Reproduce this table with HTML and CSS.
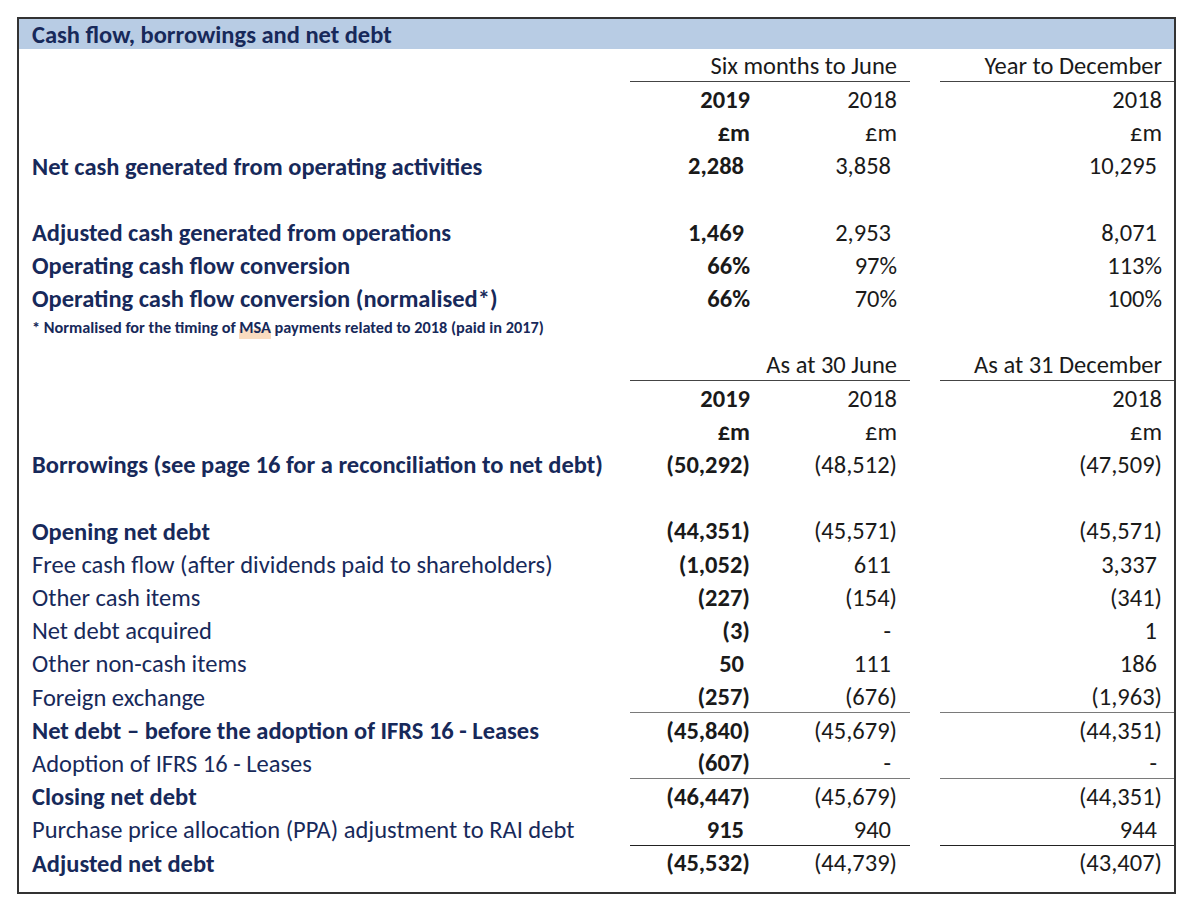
FILE: index.html
```html
<!DOCTYPE html>
<html>

<head>
  <title>Cash flow, borrowings and net debt</title>
  <link rel="stylesheet" href="styles.css">
</head>

<body>
  <section class="sheet">
    <h1 class="title">Cash flow, borrowings and net debt</h1>

    <div class="row">
      <div></div>
      <div class="cell span rule">Six months to June</div>
      <div></div>
      <div class="cell rule">Year to December</div>
    </div>
    <div class="row">
      <div></div>
      <div class="cell a">2019</div>
      <div class="cell b">2018</div>
      <div></div>
      <div class="cell c">2018</div>
    </div>
    <div class="row">
      <div></div>
      <div class="cell a">£m</div>
      <div class="cell b">£m</div>
      <div></div>
      <div class="cell c">£m</div>
    </div>
    <div class="row">
      <div class="label strong">Net cash generated from operating activities</div>
      <div class="cell a pos">2,288</div>
      <div class="cell b pos">3,858</div>
      <div></div>
      <div class="cell c pos">10,295</div>
    </div>
    <div class="row"></div>
    <div class="row">
      <div class="label strong">Adjusted cash generated from operations</div>
      <div class="cell a pos">1,469</div>
      <div class="cell b pos">2,953</div>
      <div></div>
      <div class="cell c pos">8,071</div>
    </div>
    <div class="row">
      <div class="label strong">Operating cash flow conversion</div>
      <div class="cell a">66%</div>
      <div class="cell b">97%</div>
      <div></div>
      <div class="cell c">113%</div>
    </div>
    <div class="row">
      <div class="label strong">Operating cash flow conversion (normalised*)</div>
      <div class="cell a">66%</div>
      <div class="cell b">70%</div>
      <div></div>
      <div class="cell c">100%</div>
    </div>
    <div class="row note">
      <div class="label">* Normalised for the timing of <span class="mark">MSA</span> payments related to 2018 (paid in 2017)</div>
    </div>
    <div class="row">
      <div></div>
      <div class="cell span rule">As at 30 June</div>
      <div></div>
      <div class="cell rule">As at 31 December</div>
    </div>
    <div class="row">
      <div></div>
      <div class="cell a">2019</div>
      <div class="cell b">2018</div>
      <div></div>
      <div class="cell c">2018</div>
    </div>
    <div class="row">
      <div></div>
      <div class="cell a">£m</div>
      <div class="cell b">£m</div>
      <div></div>
      <div class="cell c">£m</div>
    </div>
    <div class="row">
      <div class="label strong">Borrowings (see page 16 for a reconciliation to net debt)</div>
      <div class="cell a">(50,292)</div>
      <div class="cell b">(48,512)</div>
      <div></div>
      <div class="cell c">(47,509)</div>
    </div>
    <div class="row"></div>
    <div class="row">
      <div class="label strong">Opening net debt</div>
      <div class="cell a">(44,351)</div>
      <div class="cell b">(45,571)</div>
      <div></div>
      <div class="cell c">(45,571)</div>
    </div>
    <div class="row">
      <div class="label">Free cash flow (after dividends paid to shareholders)</div>
      <div class="cell a">(1,052)</div>
      <div class="cell b pos">611</div>
      <div></div>
      <div class="cell c pos">3,337</div>
    </div>
    <div class="row">
      <div class="label">Other cash items</div>
      <div class="cell a">(227)</div>
      <div class="cell b">(154)</div>
      <div></div>
      <div class="cell c">(341)</div>
    </div>
    <div class="row">
      <div class="label">Net debt acquired</div>
      <div class="cell a">(3)</div>
      <div class="cell b pos">-</div>
      <div></div>
      <div class="cell c pos">1</div>
    </div>
    <div class="row">
      <div class="label">Other non-cash items</div>
      <div class="cell a pos">50</div>
      <div class="cell b pos">111</div>
      <div></div>
      <div class="cell c pos">186</div>
    </div>
    <div class="row">
      <div class="label">Foreign exchange</div>
      <div class="cell a line">(257)</div>
      <div class="cell b line">(676)</div>
      <div></div>
      <div class="cell c line">(1,963)</div>
    </div>
    <div class="row">
      <div class="label strong">Net debt – before the adoption of IFRS 16 - Leases</div>
      <div class="cell a">(45,840)</div>
      <div class="cell b">(45,679)</div>
      <div></div>
      <div class="cell c">(44,351)</div>
    </div>
    <div class="row">
      <div class="label">Adoption of IFRS 16 - Leases</div>
      <div class="cell a line">(607)</div>
      <div class="cell b line pos">-</div>
      <div></div>
      <div class="cell c line pos">-</div>
    </div>
    <div class="row">
      <div class="label strong">Closing net debt</div>
      <div class="cell a">(46,447)</div>
      <div class="cell b">(45,679)</div>
      <div></div>
      <div class="cell c">(44,351)</div>
    </div>
    <div class="row">
      <div class="label">Purchase price allocation (PPA) adjustment to RAI debt</div>
      <div class="cell a total pos">915</div>
      <div class="cell b total pos">940</div>
      <div></div>
      <div class="cell c total pos">944</div>
    </div>
    <div class="row">
      <div class="label strong">Adjusted net debt</div>
      <div class="cell a">(45,532)</div>
      <div class="cell b">(44,739)</div>
      <div></div>
      <div class="cell c">(43,407)</div>
    </div>
  </section>
</body>

</html>
```

FILE: styles.css
```css
* {
  box-sizing: border-box;
}

html {
  background-color: #ffffff;
}

body {
  margin: 0;
  font: 24.5px/1 Calibri, Lato, sans-serif;
  color: #1a1a1a;
}

.sheet {
  margin: 17px 0 0 17px;
  width: 1159px;
  height: 877px;
  border: 2px solid #333333;
}

.title {
  margin: 0;
  height: 30px;
  padding: 2px 13px 0;
  display: flex;
  align-items: center;
  background-color: #b8cce4;
  color: #17295a;
  font-size: 24.5px;
  font-weight: bold;
}

.row {
  display: grid;
  grid-template-columns: 611px 135px 145px 30px 234px;
  height: 33.2px;
}

.label {
  padding: 3px 0 0 13px;
  line-height: 30px;
  color: #17295a;
  white-space: nowrap;
}

.strong {
  font-weight: bold;
}

.cell {
  display: flex;
  align-items: center;
  justify-content: flex-end;
  padding: 3px 12px 0 0;
  white-space: nowrap;
}

.a {
  padding-right: 15px;
  font-weight: bold;
}

.b {
  padding-right: 13px;
}

.a.pos {
  padding-right: 21px;
}

.b.pos {
  padding-right: 19px;
}

.c.pos {
  padding-right: 17px;
}

.span {
  grid-column: span 2;
  padding-right: 13px;
}

.rule {
  border-bottom: 1.5px solid #444444;
}

.line {
  border-bottom: 1.5px solid #7a7a7a;
}

.total {
  border-bottom: 1.5px solid #222222;
}

.note .label {
  font-size: 16.3px;
  font-weight: bold;
  line-height: 20px;
  padding-top: 2px;
}

.mark {
  display: inline-block;
  line-height: 17px;
  padding-bottom: 3px;
  background: linear-gradient(transparent 50%, #fadcc0 50%);
}
```
